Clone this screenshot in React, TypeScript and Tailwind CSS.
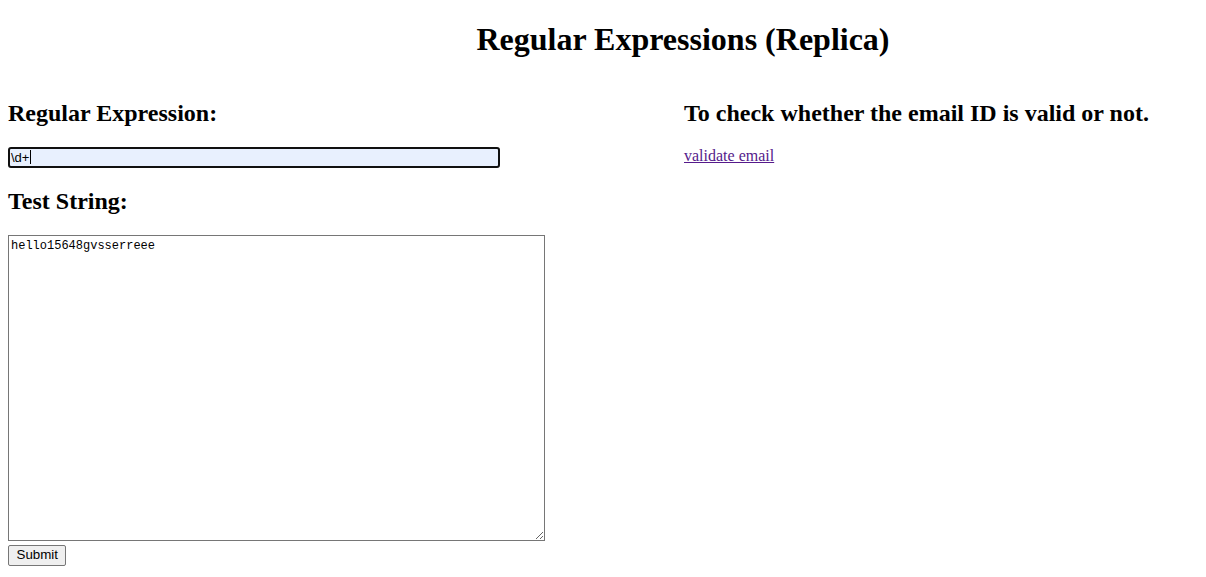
export default function App() {
  return (
    <div className="min-h-screen bg-white px-2 leading-[normal] text-black" style={{ fontFamily: '"Liberation Serif", "Times New Roman", serif' }}>
      <h1 className="mt-[21.44px] mb-[21.44px] pl-[160px] text-center text-[32px] font-bold leading-[normal]">
        Regular Expressions (Replica)
      </h1>

      <div className="flex">
        <div className="w-[676px] shrink-0">
          <h2 className="mt-[19.92px] mb-[19.92px] text-[24px] font-bold leading-[normal]">Regular Expression:</h2>
          <div className="flex h-[21px] w-[492px] items-center rounded-[3px] border-2 border-[#101010] bg-[#e8f0fe] px-[1px] font-['Liberation_Sans',Arial,sans-serif] text-[13px] leading-none">
            <span>\d+</span>
            <span className="ml-[1px] inline-block h-[14px] w-[1px] bg-black" />
          </div>

          <h2 className="mt-[19.92px] mb-[19.92px] text-[24px] font-bold leading-[normal]">Test String:</h2>
          <textarea
            defaultValue="hello15648gvsserreee"
            className="block h-[306px] w-[537px] border border-[#767676] px-[2px] pt-[3px] font-['Liberation_Mono',Consolas,monospace] text-[12px] leading-[15px] outline-none"
          />
          <button className="mt-[4px] block h-[21px] rounded-[2px] border border-[#767676] bg-[#efefef] px-[7.5px] font-['Liberation_Sans',Arial,sans-serif] text-[13.33px] leading-none">
            Submit
          </button>
        </div>

        <div>
          <h2 className="mt-[19.92px] mb-[19.92px] text-[24px] font-bold leading-[normal]">
            To check whether the email ID is valid or not.
          </h2>
          <a href="#" className="text-[16px] text-[#551a8b] underline">
            validate email
          </a>
        </div>
      </div>
    </div>
  );
}
